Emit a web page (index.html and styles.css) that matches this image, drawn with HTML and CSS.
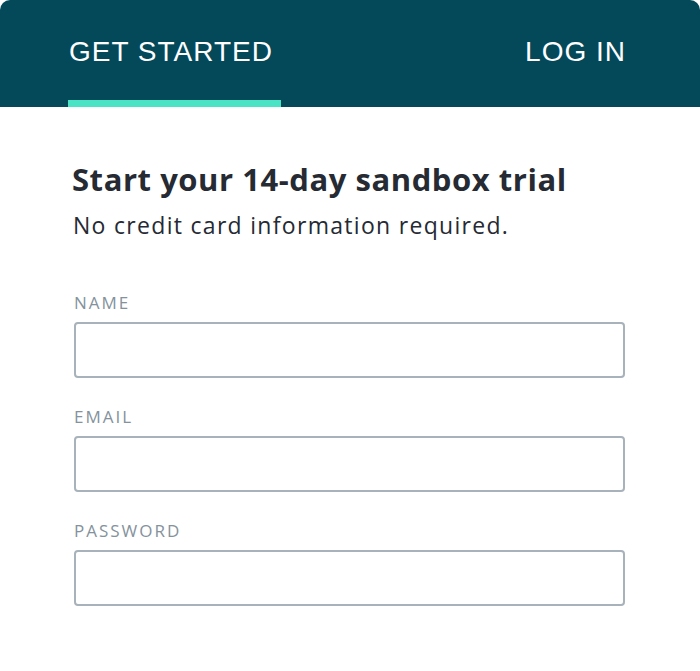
FILE: index.html
```html
<!DOCTYPE html>
<html lang="en">
<head>
    <meta charset="UTF-8">
    <meta name="viewport" content="width=device-width, initial-scale=1.0">
    <title>Start your trial</title>
    <link rel="stylesheet" href="styles.css">
</head>
<body>
    <div class="card">
        <div class="tabs">
            <a class="tab active" href="#">GET STARTED</a>
            <a class="tab" href="#">LOG IN</a>
        </div>
        <div class="content">
            <h1>Start your 14-day sandbox trial</h1>
            <p class="sub">No credit card information required.</p>
            <div class="form-group">
                <label for="name">NAME</label>
                <input type="text" id="name">
            </div>
            <div class="form-group">
                <label for="email">EMAIL</label>
                <input type="email" id="email">
            </div>
            <div class="form-group">
                <label for="password">PASSWORD</label>
                <input type="password" id="password">
            </div>
        </div>
    </div>
</body>
</html>
```

FILE: styles.css
```css
body {
    font-family: 'Open Sans', Lato, sans-serif;
    background-color: #fff;
    color: #252a33;
    margin: 0;
}
.card {
    background-color: #fff;
    border-radius: 10px 10px 0 0;
    overflow: hidden;
}
.tabs {
    display: flex;
    justify-content: space-between;
    height: 107px;
    padding: 0 74px 0 68px;
    background-color: #03495a;
}
.tab {
    position: relative;
    padding: 36px 8px 0 1px;
    color: #fff;
    text-decoration: none;
    font-family: 'Liberation Sans', Arial, sans-serif;
    font-size: 28px;
    letter-spacing: 1px;
    line-height: 32px;
}
.tab:last-child {
    padding-right: 0;
}
.tab.active::after {
    content: '';
    position: absolute;
    left: 0;
    right: 0;
    bottom: 0;
    height: 7px;
    background-color: #4ae3c6;
}
.content {
    padding: 52px 75px 0 74px;
}
h1 {
    margin: 0 0 0 -2px;
    font-size: 31px;
    font-weight: 700;
    letter-spacing: 0.55px;
    line-height: 40px;
    color: #252a33;
}
.sub {
    margin: 12px 0 0 -1px;
    font-size: 23px;
    letter-spacing: 1.3px;
    line-height: 28px;
    color: #252a33;
}
.form-group {
    margin-top: 26px;
}
.form-group:first-of-type {
    margin-top: 51px;
}
.form-group label {
    display: block;
    height: 32px;
    font-size: 17px;
    letter-spacing: 2px;
    color: #84929c;
    line-height: 25px;
}
.form-group input {
    display: block;
    width: 100%;
    height: 56px;
    box-sizing: border-box;
    border: 2px solid #a8b2ba;
    border-radius: 4px;
    font-size: 18px;
    padding: 0 12px;
    outline: none;
}
```
